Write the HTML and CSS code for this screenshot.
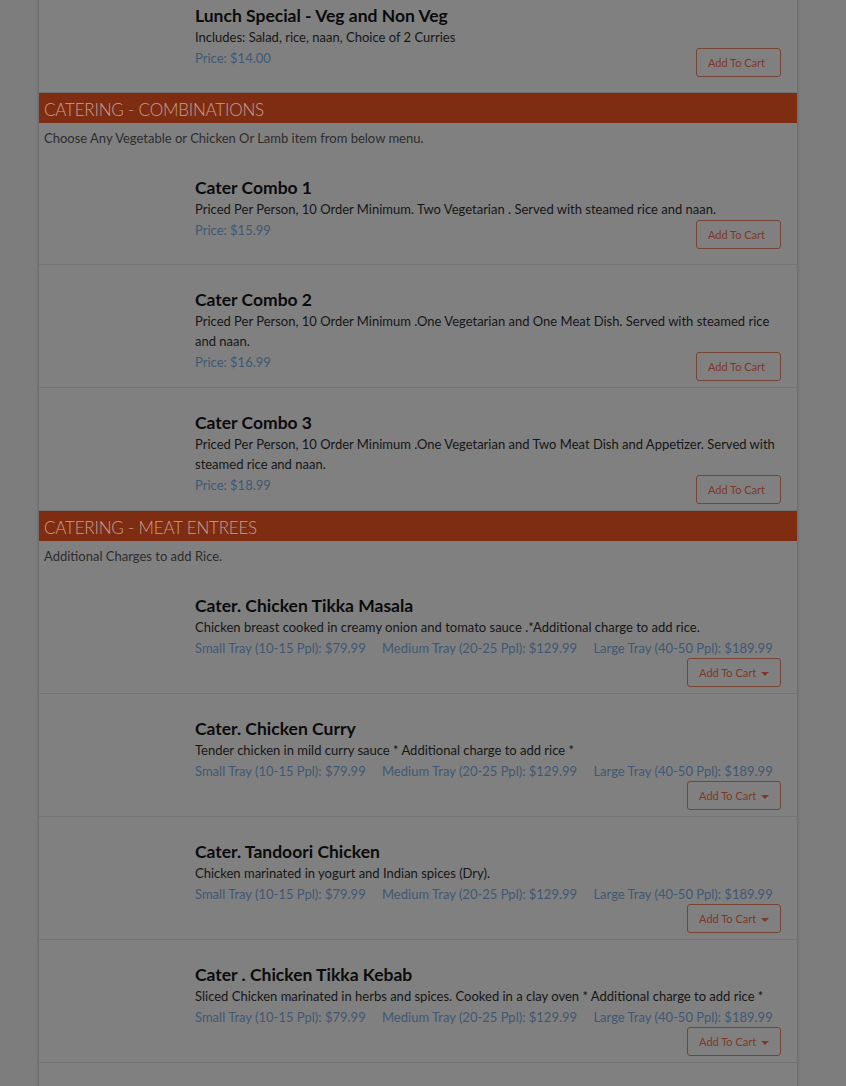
FILE: index.html
```html
<!DOCTYPE html>
<html lang="en">
<head>
    <meta charset="UTF-8">
    <title>Catering Menu</title>
    <link rel="stylesheet" href="styles.css">
</head>
<body>
<div class="menu">
    <div class="item">
        <div class="item-pic"></div>
        <div class="item-body">
            <h3 class="item-name">Lunch Special - Veg and Non Veg</h3>
            <p class="item-desc">Includes: Salad, rice, naan, Choice of 2 Curries</p>
            <div class="item-foot">
                <span class="price">Price: $14.00</span>
                <button class="btn-cart">Add To Cart</button>
            </div>
        </div>
    </div>

    <div class="cat-head">CATERING - COMBINATIONS</div>
    <div class="cat-note">Choose Any Vegetable or Chicken Or Lamb item from below menu.</div>

    <div class="item">
        <div class="item-pic"></div>
        <div class="item-body">
            <h3 class="item-name">Cater Combo 1</h3>
            <p class="item-desc">Priced Per Person, 10 Order Minimum. Two Vegetarian . Served with steamed rice and naan.</p>
            <div class="item-foot">
                <span class="price">Price: $15.99</span>
                <button class="btn-cart">Add To Cart</button>
            </div>
        </div>
    </div>
    <div class="item">
        <div class="item-pic"></div>
        <div class="item-body">
            <h3 class="item-name">Cater Combo 2</h3>
            <p class="item-desc">Priced Per Person, 10 Order Minimum .One Vegetarian and One Meat Dish. Served with steamed rice and naan.</p>
            <div class="item-foot">
                <span class="price">Price: $16.99</span>
                <button class="btn-cart">Add To Cart</button>
            </div>
        </div>
    </div>
    <div class="item">
        <div class="item-pic"></div>
        <div class="item-body">
            <h3 class="item-name">Cater Combo 3</h3>
            <p class="item-desc">Priced Per Person, 10 Order Minimum .One Vegetarian and Two Meat Dish and Appetizer. Served with steamed rice and naan.</p>
            <div class="item-foot">
                <span class="price">Price: $18.99</span>
                <button class="btn-cart">Add To Cart</button>
            </div>
        </div>
    </div>

    <div class="cat-head">CATERING - MEAT ENTREES</div>
    <div class="cat-note">Additional Charges to add Rice.</div>

    <div class="item">
        <div class="item-pic"></div>
        <div class="item-body">
            <h3 class="item-name">Cater. Chicken Tikka Masala</h3>
            <p class="item-desc">Chicken breast cooked in creamy onion and tomato sauce .*Additional charge to add rice.</p>
            <div class="sizes">
                <span class="price">Small Tray (10-15 Ppl): $79.99</span>
                <span class="price">Medium Tray (20-25 Ppl): $129.99</span>
                <span class="price">Large Tray (40-50 Ppl): $189.99</span>
            </div>
            <div class="item-foot end">
                <button class="btn-cart drop">Add To Cart <span class="caret"></span></button>
            </div>
        </div>
    </div>
    <div class="item">
        <div class="item-pic"></div>
        <div class="item-body">
            <h3 class="item-name">Cater. Chicken Curry</h3>
            <p class="item-desc">Tender chicken in mild curry sauce * Additional charge to add rice *</p>
            <div class="sizes">
                <span class="price">Small Tray (10-15 Ppl): $79.99</span>
                <span class="price">Medium Tray (20-25 Ppl): $129.99</span>
                <span class="price">Large Tray (40-50 Ppl): $189.99</span>
            </div>
            <div class="item-foot end">
                <button class="btn-cart drop">Add To Cart <span class="caret"></span></button>
            </div>
        </div>
    </div>
    <div class="item">
        <div class="item-pic"></div>
        <div class="item-body">
            <h3 class="item-name">Cater. Tandoori Chicken</h3>
            <p class="item-desc">Chicken marinated in yogurt and Indian spices (Dry).</p>
            <div class="sizes">
                <span class="price">Small Tray (10-15 Ppl): $79.99</span>
                <span class="price">Medium Tray (20-25 Ppl): $129.99</span>
                <span class="price">Large Tray (40-50 Ppl): $189.99</span>
            </div>
            <div class="item-foot end">
                <button class="btn-cart drop">Add To Cart <span class="caret"></span></button>
            </div>
        </div>
    </div>
    <div class="item">
        <div class="item-pic"></div>
        <div class="item-body">
            <h3 class="item-name">Cater . Chicken Tikka Kebab</h3>
            <p class="item-desc">Sliced Chicken marinated in herbs and spices. Cooked in a clay oven * Additional charge to add rice *</p>
            <div class="sizes">
                <span class="price">Small Tray (10-15 Ppl): $79.99</span>
                <span class="price">Medium Tray (20-25 Ppl): $129.99</span>
                <span class="price">Large Tray (40-50 Ppl): $189.99</span>
            </div>
            <div class="item-foot end">
                <button class="btn-cart drop">Add To Cart <span class="caret"></span></button>
            </div>
        </div>
    </div>
    <div class="item"></div>
</div>
</body>
</html>
```

FILE: styles.css
```css
html,body{margin:0;padding:0;}
body{background:#7d7d7d;font-family:Lato,"Liberation Sans",sans-serif;font-size:13px;color:#141414;overflow:hidden;}
.menu{width:758px;margin:-19px 0 0 38px;background:#808080;border-left:1px solid #6f6f6f;border-right:1px solid #6f6f6f;box-shadow:0 0 2px rgba(0,0,0,.2);}
.item{display:flex;min-height:112px;box-sizing:border-box;padding:24px 16px 6px 0;border-bottom:1px solid #737373;}
.item-pic{flex:none;width:156px;}
.item-body{flex:1;min-width:0;}
.item-name{margin:0;font-size:17.5px;line-height:22px;font-weight:bold;color:#0b0b0b;}
.item-desc{margin:0;line-height:20px;color:#161616;}
.item-foot{display:flex;justify-content:space-between;align-items:flex-start;margin-top:1px;}
.item-foot.end{justify-content:flex-end;margin-top:0;}
.sizes{margin-top:1px;line-height:20px;white-space:nowrap;}
.sizes .price{margin-right:13px;}
.price{color:#405873;line-height:20px;}
.btn-cart{font-family:inherit;font-size:11px;height:29px;padding:0 15px 0 11px;background:transparent;border:1px solid #774536;border-radius:3px;color:#7e3828;cursor:pointer;}
.btn-cart.drop{padding:0 11px;}
.caret{display:inline-block;width:0;height:0;margin-left:2px;vertical-align:middle;border-top:4px solid #7e3828;border-left:4px solid transparent;border-right:4px solid transparent;}
.cat-head{height:30px;line-height:33px;padding-left:5px;background:#7f2d12;color:#c2a092;font-size:17px;font-weight:300;letter-spacing:-.2px;}
.cat-note{height:30px;line-height:31px;padding-left:5px;color:#2d2d2d;}
```
